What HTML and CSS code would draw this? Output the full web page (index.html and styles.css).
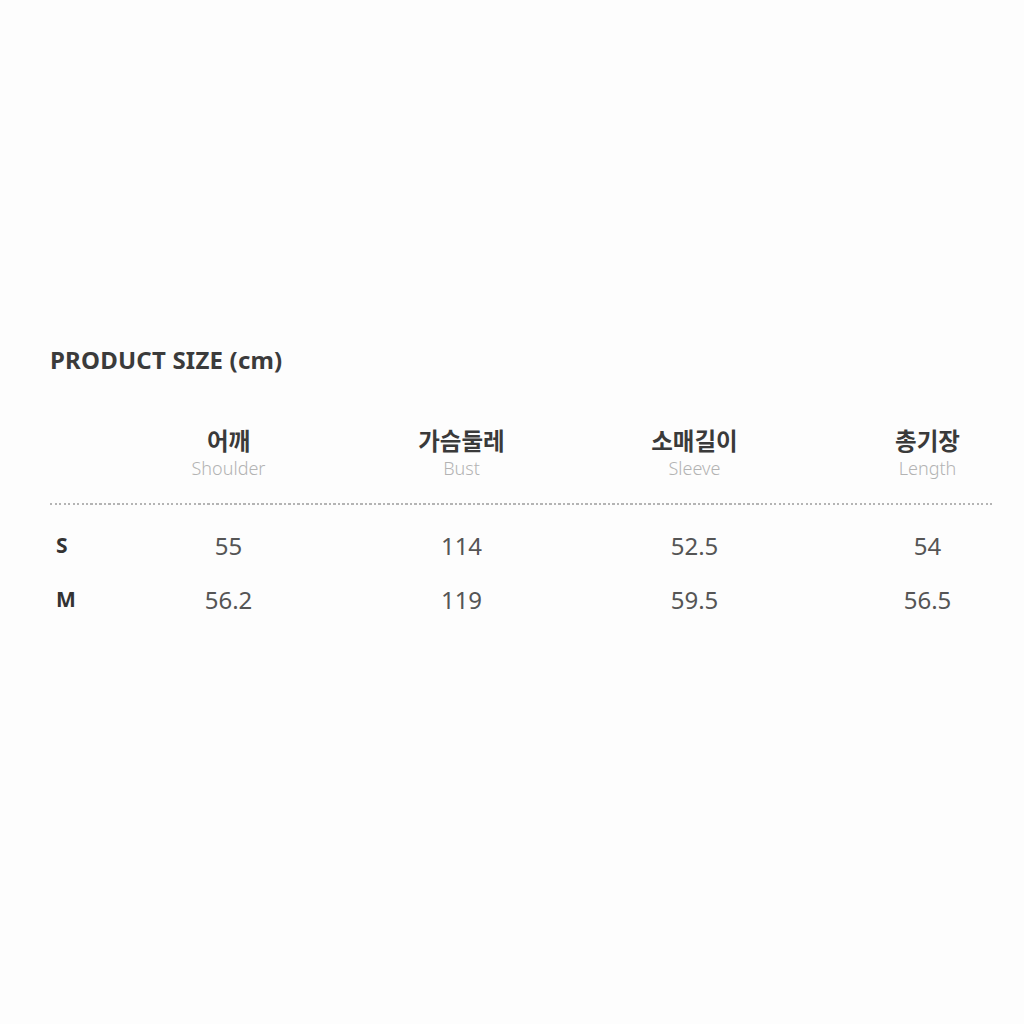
FILE: index.html
```html
<!DOCTYPE html>
<html lang="ko">
<head>
<meta charset="utf-8">
<link rel="stylesheet" href="styles.css">
</head>
<body>
<section class="size">
  <h2 class="title">PRODUCT SIZE (cm)</h2>
  <div class="grid head">
    <div class="lab"></div>
    <div class="hcell"><span class="ko">어깨</span><span class="en">Shoulder</span></div>
    <div class="hcell"><span class="ko">가슴둘레</span><span class="en">Bust</span></div>
    <div class="hcell"><span class="ko">소매길이</span><span class="en">Sleeve</span></div>
    <div class="hcell"><span class="ko">총기장</span><span class="en">Length</span></div>
  </div>
  <div class="divider"></div>
  <div class="grid row first">
    <div class="lab">S</div>
    <div class="val">55</div>
    <div class="val">114</div>
    <div class="val">52.5</div>
    <div class="val">54</div>
  </div>
  <div class="grid row">
    <div class="lab">M</div>
    <div class="val">56.2</div>
    <div class="val">119</div>
    <div class="val">59.5</div>
    <div class="val">56.5</div>
  </div>
</section>
</body>
</html>
```
FILE: styles.css
```css
html, body {
  margin: 0;
  padding: 0;
  background: #fdfdfd;
  overflow: hidden;
}
body {
  font-family: "Noto Sans", "Noto Sans CJK KR", sans-serif;
  color: #3a3a3a;
}
.size {
  padding: 343px 0 0 50px;
  width: 942px;
}
.title {
  margin: 0;
  font-size: 24px;
  font-weight: 700;
  line-height: 34px;
  color: #3b3b3b;
  letter-spacing: 0.2px;
}
.grid {
  display: grid;
  grid-template-columns: 62px repeat(4, 233px);
  width: 994px;
}
.head {
  margin-top: 47px;
}
.hcell {
  display: flex;
  flex-direction: column;
  align-items: center;
}
.ko {
  font-family: "Noto Sans CJK KR", sans-serif;
  font-weight: 700;
  font-size: 23.5px;
  line-height: 32px;
  color: #3a3a3a;
}
.en {
  font-weight: 300;
  font-size: 18px;
  line-height: 22px;
  color: #b3b3b3;
  margin-top: 1px;
}
.divider {
  margin-top: 24px;
  height: 2px;
  width: 943px;
  background-image: repeating-linear-gradient(to right, #b4b4b4 0, #b4b4b4 2px, transparent 2px, transparent 4.5px);
}
.row {
  align-items: center;
  height: 54px;
}
.first {
  margin-top: 13px;
}
.lab {
  font-weight: 700;
  font-size: 21px;
  color: #333;
  padding-left: 6px;
}
.val {
  text-align: center;
  font-size: 24px;
  color: #555;
}
```
